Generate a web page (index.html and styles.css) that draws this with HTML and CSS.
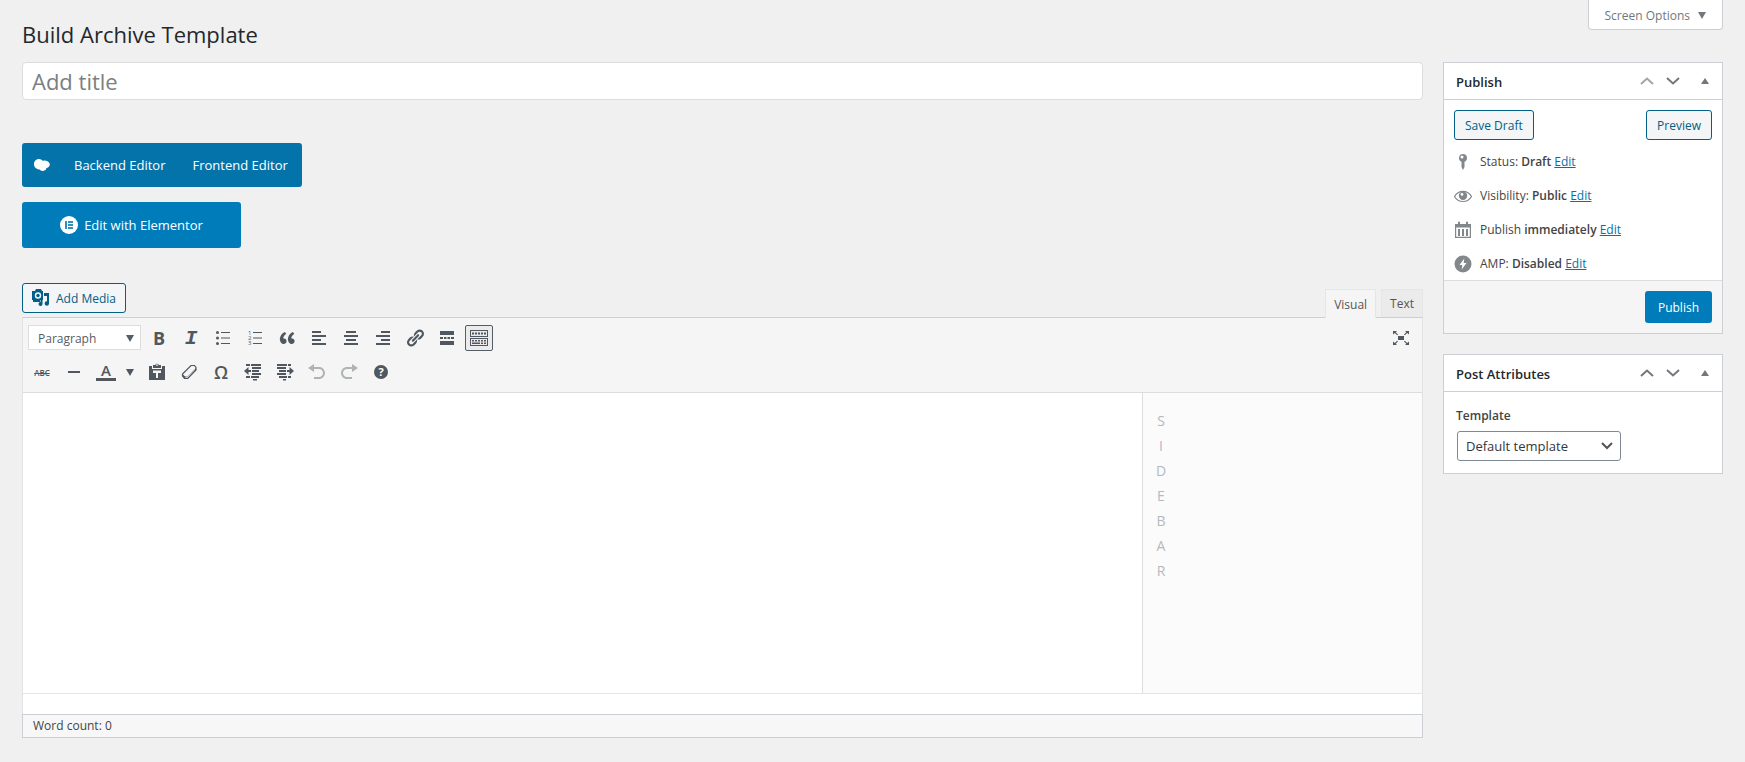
FILE: index.html
```html
<!DOCTYPE html>
<html lang="en">
<head>
    <meta charset="UTF-8">
    <title>Build Archive Template</title>
    <link rel="stylesheet" href="styles.css">
</head>
<body>
    <header>
        <h1>Build Archive Template</h1>
        <button type="button" class="screen-options">Screen Options <span class="caret"></span></button>
    </header>

    <div class="columns">
        <main>
            <input type="text" class="title" aria-label="Add title" placeholder="Add title">

            <div class="vc-bar">
                <svg width="16" height="12" viewBox="0 0 16 12"><path d="M5 0C7 0 8.300 1 8.800 2C10 1.400 12 1.500 13.500 2.300C16 3.500 16.400 6 15 7.600C14 8.800 12.800 9 12.300 9.200C12 10.800 11 11.600 10 11.400C8.800 12.300 6.600 12 5.700 10.500C2.500 10.300 0 8.200 0 5.200C0 2.200 2.200 0 5 0z"/></svg>
                <a href="#">Backend Editor</a>
                <a href="#">Frontend Editor</a>
            </div>

            <button type="button" class="elementor">
                <svg width="18" height="18" viewBox="0 0 18 18"><circle cx="9" cy="9" r="9" fill="#fff"/><path d="M5 5h2v8H5zM8 5h5v2H8zM8 8h5v2H8zM8 11h5v2H8z" fill="#2f8fbd"/></svg>
                Edit with Elementor
            </button>

            <div class="editor-tools">
                <button type="button" class="button">
                    <svg width="18" height="18" viewBox="0 0 18 18"><path fill-rule="evenodd" d="M1 2h2l1-2h5l1 2h1v9H8.500V13H1V11H0V2zM6 3.300a3.200 3.200 0 1 0 0 6.400a3.200 3.200 0 0 0 0-6.400z"/><circle cx="6" cy="6.500" r="1.700"/><path d="M12 4h5v10.500a2.200 2.200 0 1 1-2-2.200V7h-3zM10.500 10.500V15a2 2 0 1 1-1.500-2v-2.500z"/></svg>
                    Add Media
                </button>
                <div class="tabs">
                    <button type="button" class="tab active">Visual</button>
                    <button type="button" class="tab">Text</button>
                </div>
            </div>

            <div class="editor">
                <div class="toolbar">
                    <div class="row">
                        <button type="button" class="format">Paragraph <span class="caret"></span></button>
                        <button type="button" class="tool bold" title="Bold">B</button>
                        <button type="button" class="tool italic" title="Italic">I</button>
                        <button type="button" class="tool" title="Bulleted list"><svg viewBox="0 0 20 20"><circle cx="4.500" cy="4.500" r="1.500"/><circle cx="4.500" cy="10" r="1.500"/><circle cx="4.500" cy="15.500" r="1.500"/><path d="M8 4h9v1H8zM8 9.500h9v1H8zM8 15h9v1H8z"/></svg></button>
                        <button type="button" class="tool" title="Numbered list"><svg viewBox="0 0 20 20"><text x="3" y="7">1</text><text x="3" y="12">2</text><text x="3" y="17">3</text><path d="M8 4h9v1H8zM8 9.500h9v1H8zM8 15h9v1H8z"/></svg></button>
                        <button type="button" class="tool" title="Blockquote"><svg viewBox="0 0 20 20"><path d="M9.490 13.220c0-.74-.2-1.380-.61-1.900-.62-.78-1.830-.88-2.530-.72-.29-1.650 1.110-3.750 2.920-4.650L7.880 4c-2.730 1.300-5.420 4.280-4.960 8.050C3.210 14.430 4.590 16 6.540 16c.85 0 1.560-.25 2.120-.75s.83-1.180.83-2.030zm8.050 0c0-.74-.2-1.380-.61-1.900-.63-.78-1.830-.88-2.530-.72-.29-1.650 1.110-3.750 2.920-4.650L15.930 4c-2.730 1.300-5.410 4.280-4.950 8.050.29 2.380 1.660 3.950 3.610 3.950.85 0 1.560-.25 2.120-.75s.83-1.180.83-2.030z"/></svg></button>
                        <button type="button" class="tool" title="Align left"><svg viewBox="0 0 20 20"><path d="M3 3h9v2H3zM3 7h14v2H3zM3 11h9v2H3zM3 15h14v2H3z"/></svg></button>
                        <button type="button" class="tool" title="Align center"><svg viewBox="0 0 20 20"><path d="M5 3h10v2H5zM3 7h14v2H3zM5 11h10v2H5zM3 15h14v2H3z"/></svg></button>
                        <button type="button" class="tool" title="Align right"><svg viewBox="0 0 20 20"><path d="M8 3h9v2H8zM3 7h14v2H3zM8 11h9v2H8zM3 15h14v2H3z"/></svg></button>
                        <button type="button" class="tool" title="Insert link"><svg viewBox="0 0 20 20"><path d="M17.740 2.760c1.680 1.690 1.680 4.410 0 6.100l-1.530 1.520c-1.120 1.120-2.700 1.470-4.140 1.090l2.620-2.610.76-.77.76-.76c.84-.84.84-2.200 0-3.040-.84-.85-2.200-.85-3.040 0l-.77.76-3.380 3.380c-.37-1.440-.02-3.020 1.100-4.140l1.520-1.530c1.690-1.680 4.420-1.680 6.100 0zM8.590 13.430l5.340-5.340c.42-.42.42-1.100 0-1.520-.44-.43-1.130-.39-1.530 0l-5.330 5.340c-.42.42-.42 1.100 0 1.520.44.43 1.130.39 1.520 0zm-.76 2.290l4.140-4.150c.38 1.440.03 3.020-1.090 4.140l-1.520 1.530c-1.690 1.680-4.410 1.680-6.100 0-1.680-1.680-1.680-4.420 0-6.100l1.530-1.520c1.120-1.120 2.700-1.470 4.140-1.100l-4.140 4.150c-.85.84-.85 2.200 0 3.050.84.84 2.200.84 3.040 0z"/></svg></button>
                        <button type="button" class="tool" title="Read more"><svg viewBox="0 0 20 20"><path d="M3 3h14v4H3zM3 9h3v2H3zM7 9h2.500v2H7zM10.500 9H13v2h-2.500zM14 9h3v2h-3zM3 13h14v4H3z"/></svg></button>
                        <button type="button" class="tool pressed" title="Toolbar toggle"><svg viewBox="0 0 20 20"><path fill-rule="evenodd" d="M1 2h18v7H1zM2 3v5h16V3zM1 10h18v8H1zM2 11v6h16v-6z"/><path d="M3 4.500h2v2H3zM6 4.500h2v2H6zM9 4.500h2v2H9zM12 4.500h2v2h-2zM15 4.500h2v2h-2zM3 12h2v1.500H3zM6 12h2v1.500H6zM9 12h2v1.500H9zM12 12h2v1.500h-2zM15 12h2v1.500h-2zM3 14.500h8V16H3zM12 14.500h2V16h-2zM15 14.500h2V16h-2z"/></svg></button>
                        <button type="button" class="tool fullscreen" title="Fullscreen"><svg viewBox="0 0 20 20"><path d="M7 8h6v4H7zM2 3h4L4.700 4.300 7 6.500l-.8.8L3.800 5 2 6.500zM18 3v3.500L16.200 5l-2.400 2.300-.8-.8 2.300-2.200L14 3zM2 17v-3.500L3.800 15l2.400-2.300.8.8-2.300 2.200L6 17zM18 17h-4l1.300-1.300-2.300-2.200.8-.8 2.400 2.300 1.800-1.500z"/></svg></button>
                    </div>
                    <div class="row">
                        <button type="button" class="tool strike" title="Strikethrough">ABC</button>
                        <button type="button" class="tool" title="Horizontal line"><svg viewBox="0 0 20 20"><path d="M4 9h12v2H4z"/></svg></button>
                        <div class="split">
                            <button type="button" class="tool color" title="Text color"><span>A</span></button>
                            <button type="button" class="more" title="Choose color"><span class="caret"></span></button>
                        </div>
                        <button type="button" class="tool" title="Paste as text"><svg viewBox="0 0 20 20"><path fill-rule="evenodd" d="M2 4h3v3h10V4h3v14H2zM6 8.500V11h3v5h2v-5h3V8.500z"/><path fill-rule="evenodd" d="M6 3h2.200a1.900 1.900 0 0 1 3.600 0H14v3H6zM10 2.200a.9.9 0 1 0 0 1.800a.9.9 0 0 0 0-1.800z"/></svg></button>
                        <button type="button" class="tool" title="Clear formatting"><svg viewBox="0 0 20 20"><path d="M12 3.500h3.500L17 5.500V8L8.800 16.500H5.500L3.500 14v-2z" fill="none" stroke="currentColor" stroke-width="1.200"/><path d="M3.500 12l2.300 2.200h3L17 6v2l-8.200 8.500H5.500L3.500 14z"/><path d="M6.500 14.500h2.200L16 7.200V7.800L8.500 15.700H6.300z" fill="#f5f5f5"/></svg></button>
                        <button type="button" class="tool omega" title="Special character">Ω</button>
                        <button type="button" class="tool" title="Decrease indent"><svg viewBox="0 0 20 20"><path d="M8 2h10v2H8zM9 5h9v2H9zM9 8h7v2H9zM9 11h9v2H9zM8 14h8v2H8zM10 17h4v1.500h-4zM5.500 5v3H8v2H5.500v3L1 9zM3 2h4v2H3zM3 14h4v2H3z"/></svg></button>
                        <button type="button" class="tool" title="Increase indent"><svg viewBox="0 0 20 20"><path d="M2 2h10v2H2zM2 5h9v2H2zM4 8h7v2H4zM2 11h9v2H2zM4 14h8v2H4zM8 17h3v1.500H8zM14.500 5v3H12v2h2.500v3L19 9zM13 2h3v2h-3zM13 14h3v2h-3z"/></svg></button>
                        <button type="button" class="tool" title="Undo" disabled><svg viewBox="0 0 20 20"><path d="M12 5H7V2L1 6l6 4V7h5c2.200 0 4 1.800 4 4s-1.800 4-4 4H7v2h5c3.300 0 6-2.700 6-6s-2.700-6-6-6z"/></svg></button>
                        <button type="button" class="tool" title="Redo" disabled><svg viewBox="0 0 20 20"><path d="M8 5h5V2l6 4-6 4V7H8c-2.200 0-4 1.800-4 4s1.800 4 4 4h5v2H8c-3.300 0-6-2.700-6-6s2.700-6 6-6z"/></svg></button>
                        <button type="button" class="tool" title="Keyboard shortcuts"><span class="help">?</span></button>
                    </div>
                </div>
                <div class="canvas">
                    <div class="text-area"></div>
                    <div class="text-sidebar">
                        <span>S</span><span>I</span><span>D</span><span>E</span><span>B</span><span>A</span><span>R</span>
                    </div>
                </div>
                <div class="status-bar">Word count: 0</div>
            </div>
        </main>

        <aside>
            <section class="postbox">
                <div class="postbox-header">
                    <h2>Publish</h2>
                    <button type="button" class="handle dim" title="Move up"><svg width="14" height="8" viewBox="0 0 14 8"><path d="M1 7l6-5.500L13 7"/></svg></button>
                    <button type="button" class="handle" title="Move down"><svg width="14" height="8" viewBox="0 0 14 8"><path d="M1 1l6 5.500L13 1"/></svg></button>
                    <button type="button" class="handle toggle" title="Toggle panel"><span class="caret up"></span></button>
                </div>
                <div class="actions">
                    <button type="button" class="button">Save Draft</button>
                    <button type="button" class="button">Preview</button>
                </div>
                <ul class="misc">
                    <li><svg viewBox="0 0 20 20"><path fill-rule="evenodd" d="M10 2a4 4 0 0 1 1.500 7.700V15L10 18l-1.500-3V9.700A4 4 0 0 1 10 2zM9 3.500a1.500 1.500 0 1 0 0 3a1.500 1.500 0 0 0 0-3z"/></svg><span>Status: <b>Draft</b> <a href="#">Edit</a></span></li>
                    <li><svg viewBox="0 0 20 20"><path d="M1.500 10.500C3.500 7 6.500 5.300 10 5.300s6.500 1.700 8.500 5.200c-2 3.500-5 5-8.500 5s-6.500-1.500-8.500-5z" fill="none" stroke="#82878c" stroke-width="1.200"/><path fill-rule="evenodd" d="M10 5.500a4.200 4.200 0 1 1 0 8.400a4.200 4.200 0 0 1 0-8.400zM9 7a1.400 1.400 0 1 0 0 2.800A1.400 1.400 0 0 0 9 7z"/></svg><span>Visibility: <b>Public</b> <a href="#">Edit</a></span></li>
                    <li><svg viewBox="0 0 20 20"><path fill-rule="evenodd" d="M2 4h3V2.500a1 1 0 0 1 2 0V4h6V2.500a1 1 0 0 1 2 0V4h3v14H2zM3.200 7.500v9.300h13.600V7.500zM5 9h2v7H5zM9 9h2v7H9zM13 9h2v7h-2z"/></svg><span>Publish <b>immediately</b> <a href="#">Edit</a></span></li>
                    <li><svg viewBox="0 0 20 20"><circle cx="10" cy="10" r="8.500"/><path d="M11.300 4.500L6.500 11h2.800l-.6 4.500L13.500 9h-2.800z" fill="#fff"/></svg><span>AMP: <b>Disabled</b> <a href="#">Edit</a></span></li>
                </ul>
                <div class="publish-footer">
                    <button type="button" class="primary">Publish</button>
                </div>
            </section>

            <section class="postbox">
                <div class="postbox-header">
                    <h2>Post Attributes</h2>
                    <button type="button" class="handle" title="Move up"><svg width="14" height="8" viewBox="0 0 14 8"><path d="M1 7l6-5.500L13 7"/></svg></button>
                    <button type="button" class="handle" title="Move down"><svg width="14" height="8" viewBox="0 0 14 8"><path d="M1 1l6 5.500L13 1"/></svg></button>
                    <button type="button" class="handle toggle" title="Toggle panel"><span class="caret up"></span></button>
                </div>
                <div class="attributes">
                    <label for="template">Template</label>
                    <div class="select-wrap">
                        <select id="template">
                            <option>Default template</option>
                        </select>
                        <svg width="12" height="8" viewBox="0 0 12 8"><path d="M1 1l5 5 5-5"/></svg>
                    </div>
                </div>
            </section>
        </aside>
    </div>
</body>
</html>
```
FILE: styles.css
```css
* { box-sizing: border-box; }
body { font-family: "Open Sans", "Noto Sans", sans-serif; font-size: 12px; line-height: 18px; color: #444; margin: 0; padding: 0 22px 24px; background-color: #f0f0f0; }
button, input, select { font-family: inherit; font-size: inherit; margin: 0; }
button { cursor: pointer; padding: 0; }
a { color: #0073aa; }
svg { flex: none; }

header { display: flex; justify-content: space-between; align-items: flex-start; height: 62px; }
h1 { margin: 0; padding-top: 18px; font-size: 22px; line-height: 32px; font-weight: 400; color: #23282d; }
.screen-options { display: flex; align-items: center; gap: 8px; height: 30px; padding: 2px 16px 0; background-color: #fff; border: 1px solid #ccd0d4; border-top: 0; border-radius: 0 0 4px 4px; color: #72777c; }
.caret { width: 0; height: 0; border: 4px solid transparent; border-top: 7px solid currentColor; border-bottom: 0; }
.caret.up { border-top: 0; border-bottom: 6px solid currentColor; }

.columns { display: grid; grid-template-columns: minmax(0, 1fr) 280px; gap: 20px; align-items: start; }
main { display: flex; flex-direction: column; align-items: flex-start; }

.title { width: 100%; height: 38px; padding: 0 9px; font-size: 22px; background-color: #fff; border: 1px solid #ddd; border-radius: 4px; color: #32373c; }
.title::placeholder { color: #7b7f82; opacity: 1; }

.vc-bar { display: flex; align-items: center; height: 44px; margin-top: 43px; padding: 0 14px 0 12px; background-color: #0473aa; border-radius: 3px; font-size: 13px; }
.vc-bar svg { fill: #fff; margin-right: 24px; }
.vc-bar a { color: #fff; text-decoration: none; }
.vc-bar a + a { margin-left: 27px; }
.elementor { display: flex; align-items: center; justify-content: center; gap: 6px; width: 219px; height: 46px; margin-top: 15px; background-color: #007cba; border: 0; border-radius: 3px; color: #fff; font-size: 13px; }

.editor-tools { display: flex; align-items: flex-end; justify-content: space-between; width: 100%; margin-top: 35px; }
.button { display: flex; align-items: center; gap: 6px; height: 30px; padding: 0 10px; margin-bottom: 4px; background-color: #f3f5f6; border: 1px solid #016087; border-radius: 3px; color: #016087; }
.editor-tools .button { padding: 0 9px; }
.button svg { fill: #016087; }
.tabs { display: flex; gap: 5px; }
.tab { height: 28px; padding: 0 8px; background-color: #ebebeb; border: 1px solid #e5e5e5; border-bottom: 0; color: #555; }
.tab.active { height: 29px; margin-bottom: -1px; background-color: #f5f5f5; position: relative; }

.editor { width: 100%; border: 1px solid #e0e2e4; border-top-color: #ccd0d4; background-color: #fff; }
.toolbar { display: flex; flex-direction: column; gap: 8px; padding: 7px 5px; background-color: #f5f5f5; border-bottom: 1px solid #ddd; }
.row { display: flex; gap: 4px; }
.format { display: flex; align-items: center; justify-content: space-between; width: 113px; height: 25px; padding: 1px 6px 0 9px; background-color: #fff; border: 1px solid #ddd; color: #555d66; }
.tool { display: flex; align-items: center; justify-content: center; width: 28px; height: 26px; background: none; border: 1px solid transparent; border-radius: 2px; color: #50575e; }
.tool svg { width: 20px; height: 20px; fill: currentColor; }
.tool text { font-size: 6px; }
.tool:disabled { color: #b0b3b5; cursor: default; }
.pressed { background-color: #ebebeb; border-color: #555d66; }
.fullscreen { margin-left: auto; margin-right: 2px; }
.bold { font-size: 18px; font-weight: 700; }
.italic { font-family: "Liberation Mono", monospace; font-size: 21px; font-weight: 700; font-style: italic; }
.strike { font-size: 8px; font-weight: 600; text-decoration: line-through; }
.omega { font-size: 18px; font-weight: 600; }
.split { display: flex; }
.color span { width: 20px; border-bottom: 3px solid #50575e; font-size: 15px; line-height: 15px; font-weight: 600; text-align: center; }
.more { display: flex; align-items: center; justify-content: center; width: 19px; background: none; border: 0; color: #50575e; }
.help { width: 14px; height: 14px; border-radius: 50%; background-color: #50575e; color: #fff; font-size: 11px; line-height: 14px; font-weight: 700; text-align: center; }

.canvas { display: grid; grid-template-columns: minmax(0, 1fr) 280px; min-height: 301px; border-bottom: 1px solid #e5e5e5; }
.text-sidebar { display: flex; flex-direction: column; padding: 15px 0 0 10px; background-color: #fbfbfb; border-left: 1px solid #ddd; font-size: 14px; line-height: 25px; color: #b4b9be; }
.text-sidebar span { width: 16px; text-align: center; }
.status-bar { margin: 20px -1px -1px; padding: 2px 10px; background-color: #f7f7f7; border: 1px solid #ccd0d4; }

.postbox { background-color: #fff; border: 1px solid #ccd0d4; margin-bottom: 20px; }
.postbox-header { display: flex; align-items: center; height: 37px; padding: 0 12px; border-bottom: 1px solid #ccd0d4; }
h2 { flex: 1; margin: 0; padding-top: 2px; font-size: 13px; line-height: 18px; font-weight: 600; color: #23282d; }
.handle { display: flex; align-items: center; justify-content: center; width: 26px; height: 26px; background: none; border: 0; color: #72777c; }
.handle svg { fill: none; stroke: currentColor; stroke-width: 2; }
.handle.dim { color: #a0a5aa; }
.toggle { justify-content: flex-end; width: 24px; padding-right: 1px; }
.actions { display: flex; justify-content: space-between; padding: 10px 10px 0; }
.actions .button { margin: 0; }
.misc { list-style: none; margin: 0; padding: 4px 10px 0 9px; }
.misc li { display: flex; align-items: center; gap: 7px; height: 34px; padding-top: 2px; }
.misc svg { width: 20px; height: 20px; fill: #82878c; }
.misc b { font-weight: 600; }
.publish-footer { display: flex; justify-content: flex-end; padding: 10px; background-color: #f5f5f5; border-top: 1px solid #ddd; }
.primary { height: 32px; padding: 0 13px; background-color: #007cba; border: 0; border-radius: 3px; color: #fff; }
.attributes { padding: 15px 12px 12px; }
.attributes label { display: block; margin-bottom: 6px; font-weight: 600; }
.select-wrap { display: grid; align-items: center; width: 164px; margin-left: 1px; }
.select-wrap select { grid-area: 1 / 1; width: 100%; height: 30px; padding: 0 24px 0 8px; appearance: none; background-color: #fff; border: 1px solid #7e8993; border-radius: 3px; color: #32373c; font-size: 13px; }
.select-wrap svg { grid-area: 1 / 1; justify-self: end; margin-right: 8px; fill: none; stroke: #555; stroke-width: 2; pointer-events: none; }
```
